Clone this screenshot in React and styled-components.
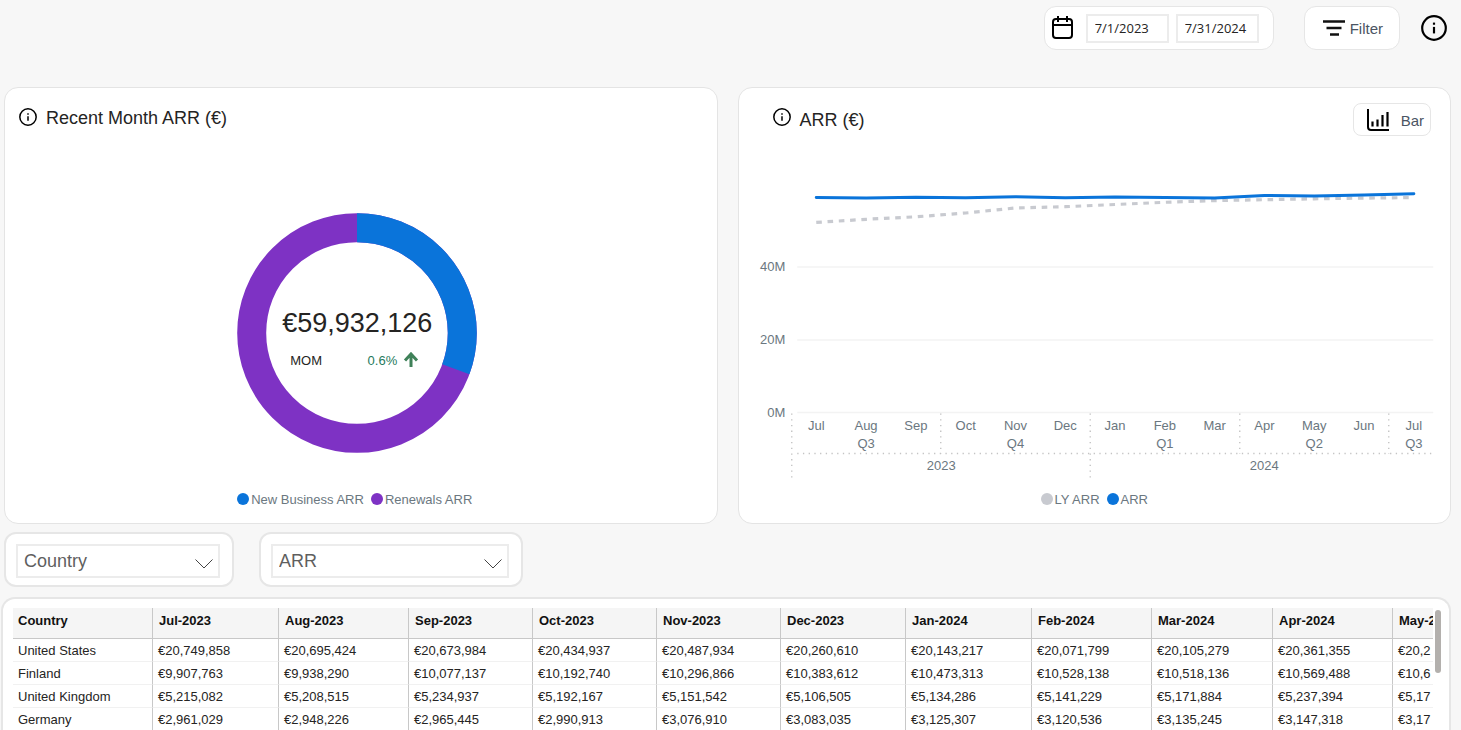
import React from 'react';
import styled, { createGlobalStyle } from 'styled-components';

const BLUE = '#0a74da';
const PURPLE = '#7e32c4';
const GREY = '#c8cad0';

const months = ['Jul', 'Aug', 'Sep', 'Oct', 'Nov', 'Dec', 'Jan', 'Feb', 'Mar', 'Apr', 'May', 'Jun', 'Jul'];
const quarters = [[1, 'Q3'], [4, 'Q4'], [7, 'Q1'], [10, 'Q2'], [12, 'Q3']];
const arr = [47.5, 48, 47.3, 47.8, 46.7, 47.8, 47.1, 47.6, 48.1, 45.4, 46, 44.9, 43.8];
const lyArr = [72.4, 69.3, 66.8, 63, 58, 56.7, 54.5, 52.3, 50.6, 49.7, 48.8, 48.1, 47.6];

const columns = [
  ['Country', 140], ['Jul-2023', 126], ['Aug-2023', 130], ['Sep-2023', 124], ['Oct-2023', 124], ['Nov-2023', 124],
  ['Dec-2023', 125], ['Jan-2024', 126], ['Feb-2024', 120], ['Mar-2024', 121], ['Apr-2024', 120], ['May-2024', 122],
];

const rows = [
  ['United States', '€20,749,858', '€20,695,424', '€20,673,984', '€20,434,937', '€20,487,934', '€20,260,610', '€20,143,217', '€20,071,799', '€20,105,279', '€20,361,355', '€20,2'],
  ['Finland', '€9,907,763', '€9,938,290', '€10,077,137', '€10,192,740', '€10,296,866', '€10,383,612', '€10,473,313', '€10,528,138', '€10,518,136', '€10,569,488', '€10,6'],
  ['United Kingdom', '€5,215,082', '€5,208,515', '€5,234,937', '€5,192,167', '€5,151,542', '€5,106,505', '€5,134,286', '€5,141,229', '€5,171,884', '€5,237,394', '€5,17'],
  ['Germany', '€2,961,029', '€2,948,226', '€2,965,445', '€2,990,913', '€3,076,910', '€3,083,035', '€3,125,307', '€3,120,536', '€3,135,245', '€3,147,318', '€3,17'],
];

const InfoIcon = ({ size }) => (
  <svg width={size} height={size} viewBox="0 0 24 24" fill="none" stroke="#000" strokeWidth="2" aria-hidden="true">
    <circle cx="12" cy="12" r="10.9" />
    <path d="M12 11v6" />
    <path d="M12 7v2" />
  </svg>
);

const CalendarIcon = () => (
  <svg width="22" height="24" viewBox="0 0 22 24" fill="none" stroke="#000" strokeWidth="2" aria-hidden="true">
    <rect x="1" y="3" width="19" height="19" rx="3" />
    <path d="M1 9h19M6 0v6M15 0v6" />
  </svg>
);

const FilterIcon = () => (
  <svg width="22" height="18" viewBox="0 0 22 18" fill="none" stroke="#111" strokeWidth="2.4" aria-hidden="true">
    <path d="M0 2.500h22M3.500 9h15M7 15.500h9" />
  </svg>
);

const BarIcon = () => (
  <svg width="24" height="24" viewBox="0 0 24 24" fill="none" stroke="#000" strokeWidth="2" aria-hidden="true">
    <path d="M2 1v18q0 3 3 3h18" />
    <path d="M6.500 13.500v5M11.500 11.500v7M16.500 7v11.500M21.500 4v14.500" strokeWidth="2.2" />
  </svg>
);

const UpArrow = () => (
  <svg width="16" height="16" viewBox="0 0 16 16" fill="none" stroke="#3f8159" strokeWidth="3" aria-hidden="true">
    <path d="M8 15V3M2 8.500l6-6.500 6 6.500" />
  </svg>
);

const monthX = (i) => 77 + i * 49.8;
const toPoints = (values) => values.map((y, i) => `${monthX(i)},${y}`).join(' ');

const Donut = () => {
  // 110.1 degrees of new business, clockwise from the top
  const total = 2 * Math.PI * 105.3;
  const part = total * (110.1 / 360);
  return (
    <svg width="240" height="240" viewBox="0 0 240 240" role="img" aria-label="Recent Month ARR">
      <circle cx="120" cy="120" r="105.3" fill="none" stroke={PURPLE} strokeWidth="29" />
      <circle
        cx="120" cy="120" r="105.3" fill="none" stroke={BLUE} strokeWidth="29"
        strokeDasharray={`${part} ${total - part}`} transform="rotate(-90 120 120)"
      />
    </svg>
  );
};

const LineChart = () => (
  <ChartSvg viewBox="0 0 711 330" role="img" aria-label="ARR by month">
    {[['40M', 117], ['20M', 190], ['0M', 262.5]].map(([label, y]) => (
      <g key={label}>
        <line x1="58" x2="694" y1={y} y2={y} stroke="#f3f3f3" strokeWidth="1.5" />
        <text x="46" y={y + 4} textAnchor="end">{label}</text>
      </g>
    ))}
    {months.map((m, i) => <text key={i} x={monthX(i)} y="280" textAnchor="middle">{m}</text>)}
    {quarters.map(([i, q]) => <text key={i} x={monthX(i)} y="298" textAnchor="middle">{q}</text>)}
    <text x="202" y="320" textAnchor="middle">2023</text>
    <text x="525" y="320" textAnchor="middle">2024</text>
    <g stroke="#c4c4c4" strokeDasharray="1.3 4.4" strokeWidth="1.4">
      <path d="M58 303.500H694" />
      <path d="M52.500 263.500V328M351 263.500V328" />
      <path d="M201.500 263.500V304M500.500 263.500V304M649.500 263.500V304" />
    </g>
    <polyline points={toPoints(lyArr)} fill="none" stroke={GREY} strokeWidth="3.2" strokeDasharray="5.6 5.7" />
    <polyline points={toPoints(arr)} fill="none" stroke={BLUE} strokeWidth="3" strokeLinecap="round" strokeLinejoin="round" />
  </ChartSvg>
);

const App = () => {
  return (
    <>
      <GlobalStyle />
      <Page>
        <TopBar>
          <DateBox>
            <CalendarIcon />
            <DateFields>
              <DateInput type="text" defaultValue="7/1/2023" aria-label="Start date" />
              <DateInput type="text" defaultValue="7/31/2024" aria-label="End date" />
            </DateFields>
          </DateBox>
          <FilterButton type="button"><FilterIcon />Filter</FilterButton>
          <InfoButton type="button" aria-label="Information"><InfoIcon size={26} /></InfoButton>
        </TopBar>

        <Cards>
          <Card>
            <CardHeader>
              <TitleGroup>
                <InfoIcon size={18} />
                <CardTitle>Recent Month ARR (€)</CardTitle>
              </TitleGroup>
            </CardHeader>
            <DonutArea>
              <Donut />
              <DonutCenter>
                <Total>€59,932,126</Total>
                <Change>
                  <span>MOM</span>
                  <Percent>0.6%<UpArrow /></Percent>
                </Change>
              </DonutCenter>
            </DonutArea>
            <Legend $shift="12px">
              <LegendItem><Dot $color={BLUE} />New Business ARR</LegendItem>
              <LegendItem><Dot $color={PURPLE} />Renewals ARR</LegendItem>
            </Legend>
          </Card>

          <Card>
            <CardHeader $indent>
              <TitleGroup>
                <InfoIcon size={18} />
                <CardTitle $low>ARR (€)</CardTitle>
              </TitleGroup>
              <BarButton type="button"><BarIcon />Bar</BarButton>
            </CardHeader>
            <LineArea><LineChart /></LineArea>
            <Legend>
              <LegendItem><Dot $color={GREY} />LY ARR</LegendItem>
              <LegendItem><Dot $color={BLUE} />ARR</LegendItem>
            </Legend>
          </Card>
        </Cards>

        <Selectors>
          <SelectBox $width="230px">
            <Select aria-label="Dimension"><option>Country</option></Select>
            <Chevron viewBox="0 0 18 10"><path d="M0.500 0.500l8.500 8.500 8.500-8.500" /></Chevron>
          </SelectBox>
          <SelectBox $width="264px">
            <Select aria-label="Measure"><option>ARR</option></Select>
            <Chevron viewBox="0 0 18 10"><path d="M0.500 0.500l8.500 8.500 8.500-8.500" /></Chevron>
          </SelectBox>
        </Selectors>

        <TableCard>
          <TableScroll>
            <Table>
              <colgroup>
                {columns.map(([name, width]) => <Col key={name} $width={width} />)}
              </colgroup>
              <thead>
                <tr>{columns.map(([name]) => <Th key={name} scope="col">{name}</Th>)}</tr>
              </thead>
              <tbody>
                {rows.map((row) => (
                  <tr key={row[0]}>{row.map((cell, i) => <Td key={i}>{cell}</Td>)}</tr>
                ))}
              </tbody>
            </Table>
          </TableScroll>
          <ScrollThumb />
        </TableCard>
      </Page>
    </>
  );
};

export default App;

const GlobalStyle = createGlobalStyle`
  * {
    box-sizing: border-box;
  }

  body {
    margin: 0;
    background-color: #f7f7f7;
    color: #252423;
    font-family: "Liberation Sans", Arial, sans-serif;
    font-size: 13px;
  }

  svg {
    display: block;
    flex-shrink: 0;
  }

  button, input, select {
    font-family: inherit;
    color: inherit;
  }
`;

const Page = styled.div`
  display: flex;
  flex-direction: column;
  height: 100vh;
  overflow: hidden;
`;

const TopBar = styled.header`
  display: flex;
  justify-content: flex-end;
  align-items: center;
  padding: 6px 14px 0 0;
`;

const DateBox = styled.div`
  display: flex;
  align-items: center;
  gap: 12px;
  height: 44px;
  padding: 0 14px 0 7px;
  margin-right: 30px;
  border: 1px solid #e6e6e6;
  border-radius: 12px;
  background-color: white;
`;

const DateFields = styled.div`
  display: flex;
  gap: 7px;
`;

const DateInput = styled.input`
  width: 83px;
  height: 29px;
  padding: 0 7px;
  border: 2px solid #ececec;
  background-color: white;
  font-family: "Open Sans", "Noto Sans", sans-serif;
  font-size: 13px;
`;

const FilterButton = styled.button`
  display: flex;
  align-items: center;
  gap: 5px;
  height: 44px;
  padding: 0 16px 0 18px;
  margin-right: 21px;
  border: 1px solid #e6e6e6;
  border-radius: 12px;
  background-color: white;
  color: #4b5563;
  font-size: 15px;
`;

const InfoButton = styled.button`
  padding: 0;
  border: none;
  background: none;
`;

const Cards = styled.div`
  display: grid;
  grid-template-columns: 1fr 1fr;
  gap: 20px;
  padding: 37px 10px 0 4px;
`;

const Card = styled.section`
  display: flex;
  flex-direction: column;
  min-width: 0;
  border: 1px solid #e4e4e4;
  border-radius: 14px;
  background-color: white;
`;

const CardHeader = styled.div`
  display: flex;
  justify-content: space-between;
  height: 62px;
  padding: 15px 19px 0 ${({ $indent }) => ($indent ? '34px' : '14px')};
`;

const TitleGroup = styled.div`
  display: flex;
  align-items: flex-start;
  gap: 9px;
  padding-top: 5px;
`;

const CardTitle = styled.h2`
  margin: 0;
  font-size: 18px;
  font-weight: 400;
  line-height: ${({ $low }) => ($low ? '24px' : '20px')};
`;

const BarButton = styled.button`
  display: flex;
  align-items: center;
  gap: 11px;
  height: 33px;
  padding: 1px 6px 0 12px;
  border: 1px solid #e6e6e6;
  border-radius: 8px;
  background-color: white;
  color: #4b5563;
  font-size: 15px;
`;

const DonutArea = styled.div`
  position: relative;
  display: flex;
  justify-content: center;
  align-items: flex-end;
  height: 303px;
  padding-right: 7px;
`;

const DonutCenter = styled.div`
  position: absolute;
  bottom: 84px;
  width: 152px;
`;

const Total = styled.div`
  font-size: 27px;
  line-height: 32px;
  text-align: center;
`;

const Change = styled.div`
  display: flex;
  justify-content: space-between;
  padding: 13px 14px 0 9px;
  line-height: 17px;
`;

const Percent = styled.span`
  display: flex;
  gap: 6px;
  color: #1f7a5c;
`;

const Legend = styled.div`
  display: flex;
  justify-content: center;
  align-items: center;
  gap: 7px;
  height: 43px;
  padding: 0 ${({ $shift }) => $shift || '0'} 5px 0;
  margin-top: auto;
  color: #6b7780;
`;

const LegendItem = styled.span`
  display: flex;
  align-items: center;
  gap: 2px;
  font-size: 13px;
`;

const Dot = styled.span`
  width: 12px;
  height: 12px;
  border-radius: 50%;
  background-color: ${({ $color }) => $color};
`;

const LineArea = styled.div`
  height: 330px;
`;

const ChartSvg = styled.svg`
  width: 100%;
  height: 330px;

  text {
    fill: #6b7780;
    font-size: 13px;
  }
`;

const Selectors = styled.div`
  display: flex;
  gap: 25px;
  padding: 8px 4px 10px;
`;

const SelectBox = styled.div`
  position: relative;
  width: ${({ $width }) => $width};
  height: 55px;
  padding: 10px 12px 8px 10px;
  border: 2px solid #e6e6e6;
  border-radius: 12px;
  background-color: white;
`;

const Select = styled.select`
  width: 100%;
  height: 34px;
  padding: 0 6px;
  border: 2px solid #ececec;
  border-radius: 0;
  background-color: white;
  color: #5f5f5f;
  font-size: 18px;
  appearance: none;
`;

const Chevron = styled.svg`
  position: absolute;
  top: 25px;
  right: 19px;
  width: 18px;
  height: 10px;
  fill: none;
  stroke: #444;
  pointer-events: none;
`;

const TableCard = styled.section`
  display: flex;
  flex: 1;
  gap: 2px;
  min-height: 0;
  margin: 0 10px 0 1px;
  padding: 9px 8px 0 10px;
  border: 2px solid #e6e6e6;
  border-bottom: none;
  border-radius: 14px 14px 0 0;
  background-color: white;
`;

const TableScroll = styled.div`
  flex: 1;
  min-width: 0;
  overflow: hidden;
`;

const Table = styled.table`
  width: 1502px;
  table-layout: fixed;
  border-collapse: separate;
  border-spacing: 0;
`;

const Col = styled.col`
  width: ${({ $width }) => $width}px;
`;

const Th = styled.th`
  height: 31px;
  padding: 0 6px 5px;
  border-right: 1px solid #c8c8c8;
  border-bottom: 1px solid #c8c8c8;
  background-color: #f5f5f5;
  color: #111;
  font-size: 13px;
  text-align: left;

  &:first-child {
    padding-left: 5px;
  }
`;

const Td = styled.td`
  height: 23px;
  padding: 0 5px;
  border-right: 1px solid #c8c8c8;
  border-bottom: 1px solid #f1f1f1;
  white-space: nowrap;
`;

const ScrollThumb = styled.div`
  width: 6px;
  height: 63px;
  margin-top: 2px;
  border-radius: 3px;
  background-color: #b3b0ad;
`;
